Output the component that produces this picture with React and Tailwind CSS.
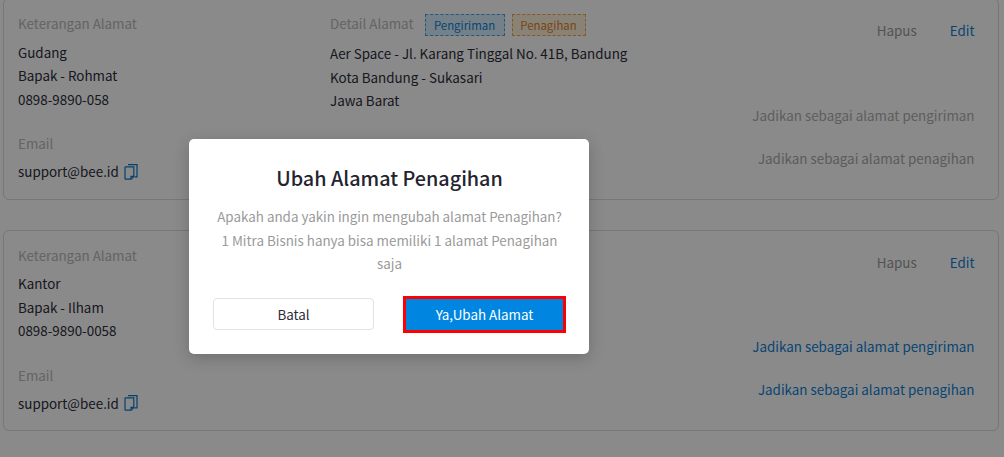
const fontStack = { fontFamily: '"Noto Sans CJK JP", "Noto Sans", sans-serif' };

const CopyIcon = () => (
  <svg width="14" height="16" viewBox="0 0 14 16" fill="none" stroke="#0b78c8" strokeWidth="1.2" className="ml-[5px] shrink-0">
    <path d="M4 .6h9v12.2h-2.6" />
    <path d="M1.6 2.8h8.2v9.6l-2.6 2.8H1.6a.6 .6 0 0 1-.6-.6V3.4a.6 .6 0 0 1 .6-.6z" />
    <path d="M7 15v-2.6h2.8" />
  </svg>
);

const AddressCard = ({ place, person, phone, detail, tags, active }) => (
  <div className="h-[201.5px] rounded-[6px] border border-[#dcdcdc] bg-white pl-[14px] pr-[23.5px] pt-[14px]">
    <div className="flex">
      <div className="w-[312px] shrink-0">
        <div className="h-[20px] text-[13.4px] leading-[20px] text-[#b9b9b9]">Keterangan Alamat</div>
        <div className="mt-[7.6px] text-[13.4px] leading-[23.6px] text-[#2d2d3a]">
          <div>{place}</div>
          <div>{person}</div>
          <div>{phone}</div>
        </div>
        <div className="mt-[22px] h-[20px] text-[13.4px] leading-[20px] text-[#b9b9b9]">Email</div>
        <div className="mt-[7px] flex items-center text-[13.4px] leading-[23px] text-[#2d2d3a]">
          support@bee.id
          <CopyIcon />
        </div>
      </div>
      <div className="flex-1">
        {detail && (
          <>
            <div className="flex h-[20px] items-center text-[13.4px] leading-[20px] text-[#b9b9b9]">
              Detail Alamat
              {tags}
            </div>
            <div className="mt-[9px] text-[13.4px] leading-[23.6px] text-[#2d2d3a]">
              {detail.map((line) => (
                <div key={line}>{line}</div>
              ))}
            </div>
          </>
        )}
      </div>
      <div className="flex flex-col items-end pt-[7px] text-[13.4px]">
        <div className="flex gap-[33px] leading-[20px]">
          <span className="text-[#9a9a9a]">Hapus</span>
          <span className="text-[#0f7fd6]">Edit</span>
        </div>
        <div className={`mt-[64.5px] leading-[20px] ${active ? "text-[#0f7fd6]" : "text-[#b0aeae]"}`}>
          Jadikan sebagai alamat pengiriman
        </div>
        <div className={`mt-[23px] leading-[20px] ${active ? "text-[#0f7fd6]" : "text-[#a9a9a9]"}`}>
          Jadikan sebagai alamat penagihan
        </div>
      </div>
    </div>
  </div>
);

export default function App() {
  return (
    <div className="relative h-[457px] w-[1004px] overflow-hidden bg-white" style={fontStack}>
      <div className="-mt-[2px] flex flex-col gap-[30px] pl-[3px] pr-[5px]">
        <AddressCard
          place="Gudang"
          person="Bapak - Rohmat"
          phone="0898-9890-058"
          detail={[
            "Aer Space - Jl. Karang Tinggal No. 41B, Bandung",
            "Kota Bandung - Sukasari",
            "Jawa Barat",
          ]}
          tags={
            <>
              <span className="ml-[11px] mt-[4px] flex h-[22px] w-[80px] shrink-0 items-center justify-center border border-dashed border-[#3fa3e0] bg-[#d9eefb] text-[11.4px] text-[#0f7fd6]">
                Pengiriman
              </span>
              <span className="ml-[7px] mt-[4px] flex h-[22px] w-[74px] shrink-0 items-center justify-center border border-dashed border-[#f0a63c] bg-[#fdf0dc] text-[11.4px] text-[#e2802a]">
                Penagihan
              </span>
            </>
          }
        />
        <AddressCard place="Kantor" person="Bapak - Ilham" phone="0898-9890-0058" active />
      </div>

      {/* backdrop + dialog */}
      <div className="absolute inset-0 bg-black/[0.46]">
        <div className="ml-[189px] mt-[139px] h-[215px] w-[400px] rounded-[5px] bg-white pl-[24px] pr-[23px] pt-[23px] shadow-[0_4px_16px_rgba(0,0,0,0.2)]">
          <h2 className="text-center text-[19.8px] font-medium leading-[32px] text-[#24242f]">Ubah Alamat Penagihan</h2>
          <p className="mt-[11px] text-center text-[13.4px] leading-[23.6px] text-[#9a9a9a]">
            Apakah anda yakin ingin mengubah alamat Penagihan? 1 Mitra Bisnis hanya bisa memiliki 1 alamat Penagihan saja
          </p>
          <div className="mt-[20px] flex items-center justify-between">
            <button className="h-[32px] w-[161px] rounded-[4px] border border-[#dfe3e6] bg-white text-[13.4px] text-[#2d2d3a]">
              Batal
            </button>
            <button className="h-[37px] w-[163px] border-[3px] border-[#ff0000] bg-[#0085e0] text-[13.4px] text-white">
              Ya,Ubah Alamat
            </button>
          </div>
        </div>
      </div>
    </div>
  );
}
